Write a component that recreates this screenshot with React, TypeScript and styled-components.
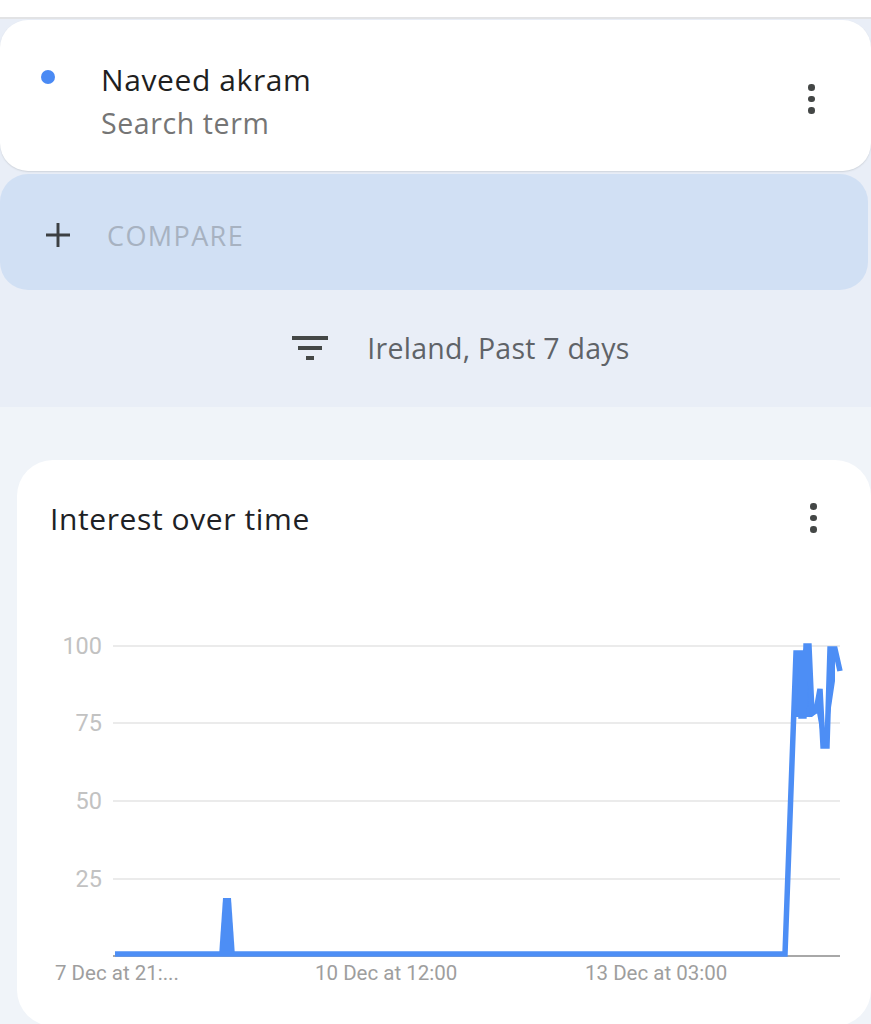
import React from 'react'
import styled, { createGlobalStyle } from 'styled-components'

const GlobalStyle = createGlobalStyle`
  html, body {
    margin: 0;
    padding: 0;
    background: #f0f4f9;
    font-family: "Open Sans", Roboto, Arial, sans-serif;
    overflow: hidden;
  }
`

// chart line, in svg coordinates (svg sits 17px in, 600px down)
const linePoints: [number, number][] = [
  [98, 353], [768, 353], [779, 52], [784, 52], [784, 115], [787, 115],
  [789, 45], [792, 45], [795, 112], [799, 110], [803, 88],
  [806, 145], [810, 145], [813, 48], [818, 48], [823, 70],
]

// filled spike around 8 Dec
const spike = '202,355 206,297 214,297 218,355'

// filled blob where the line zig-zags at the end
const blob = '776,60 779,52 785,52 788,45 793,45 797,112 803,88 807,140 811,140 813,48 818,48 818,80 812,120 806,145 800,112 795,116 787,116 776,116'

const gridLines = [
  { label: '100', y: 45 },
  { label: '75', y: 122 },
  { label: '50', y: 200 },
  { label: '25', y: 278 },
]

const xLabels = [
  { label: '7 Dec at 21:...', x: 38 },
  { label: '10 Dec at 12:00', x: 298 },
  { label: '13 Dec at 03:00', x: 568 },
]

const MoreDots: React.FC = () => (
  <DotsCol>
    <Dot />
    <Dot />
    <Dot />
  </DotsCol>
)

const App: React.FC = () => {
  return (
    <Page>
      <GlobalStyle />
      <TopStrip />
      <Header>
        <TermCard>
          <ColorDot />
          <TermText>
            <TermName>Naveed akram</TermName>
            <TermType>Search term</TermType>
          </TermText>
          <MenuSlot>
            <MoreDots />
          </MenuSlot>
        </TermCard>
        <CompareBar>
          <PlusIcon viewBox="0 0 24 24">
            <path d="M12 3v18M3 12h18" stroke="#3c4043" strokeWidth="2.2" fill="none" />
          </PlusIcon>
          <CompareLabel>COMPARE</CompareLabel>
        </CompareBar>
        <FilterRow>
          <FilterIcon viewBox="0 0 24 24">
            <path d="M10 18h4v-2h-4v2zM3 6v2h18V6H3zm3 7h12v-2H6v2z" fill="#444746" />
          </FilterIcon>
          <FilterText>Ireland, Past 7 days</FilterText>
        </FilterRow>
      </Header>
      <ChartSection>
        <ChartCard>
          <ChartHead>
            <ChartTitle>Interest over time</ChartTitle>
            <MoreDots />
          </ChartHead>
          <ChartSvg viewBox="0 0 854 400" width="854" height="400">
            {gridLines.map(g => (
              <g key={g.label}>
                <line x1="96" x2="823" y1={g.y} y2={g.y} stroke="#e4e4e4" strokeWidth="1.5" />
                <text x="85" y={g.y + 8} textAnchor="end" fontSize="23.5" fill="#c2c2c2"
                  fontFamily="Roboto, Arial, sans-serif">{g.label}</text>
              </g>
            ))}
            <line x1="96" x2="823" y1="355" y2="355" stroke="#a8a8a8" strokeWidth="2" />
            <polygon points={spike} fill="#4d8ef5" />
            <polygon points={blob} fill="#4d8ef5" />
            <polyline
              points={linePoints.map(p => p.join(',')).join(' ')}
              fill="none"
              stroke="#4d8ef5"
              strokeWidth="5.5"
              strokeLinejoin="miter"
            />
            {xLabels.map(l => (
              <text key={l.label} x={l.x} y="379" fontSize="20.5" fill="#9e9e9e"
                fontFamily="Roboto, Arial, sans-serif">{l.label}</text>
            ))}
          </ChartSvg>
        </ChartCard>
      </ChartSection>
    </Page>
  )
}

/* Styles */
const Page = styled.div`
  width: 871px;
  height: 1024px;
  overflow: hidden;
  background: #f0f4f9;
`

const TopStrip = styled.div`
  height: 17px;
  background: #ffffff;
  border-bottom: 2px solid #e2e3e5;
`

const Header = styled.div`
  background: #e9eef7;
  padding-top: 1px;
  height: 387px;
`

const TermCard = styled.div`
  display: flex;
  align-items: flex-start;
  height: 151px;
  box-sizing: border-box;
  padding: 40px 56px 0 41px;
  background: #ffffff;
  border-radius: 28px;
  box-shadow: 0 1px 1.5px rgba(60, 64, 67, 0.15);
`

const ColorDot = styled.span`
  width: 14px;
  height: 14px;
  margin-top: 10px;
  border-radius: 50%;
  background: #4a8af4;
  flex-shrink: 0;
`

const TermText = styled.div`
  display: flex;
  flex-direction: column;
  margin-left: 46px;
  flex: 1;
`

const TermName = styled.div`
  font-size: 30px;
  letter-spacing: 0.6px;
  line-height: 40px;
  color: #1f1f1f;
`

const TermType = styled.div`
  font-size: 28.5px;
  letter-spacing: 0.6px;
  line-height: 40px;
  margin-top: 3px;
  color: #757575;
`

const MenuSlot = styled.div`
  padding-top: 24px;
`

const DotsCol = styled.div`
  display: flex;
  flex-direction: column;
  align-items: center;
  gap: 5px;
  width: 7px;
`

const Dot = styled.span`
  width: 6.5px;
  height: 6.5px;
  border-radius: 50%;
  background: #444746;
`

const CompareBar = styled.div`
  display: flex;
  align-items: center;
  height: 116px;
  margin: 3px 3px 0 0;
  padding: 6px 0 0 42px;
  box-sizing: border-box;
  background: #d1e0f4;
  border-radius: 28px;
`

const PlusIcon = styled.svg`
  width: 32px;
  height: 32px;
`

const CompareLabel = styled.span`
  margin-left: 33px;
  font-size: 27px;
  letter-spacing: 1.4px;
  color: #a7b2c1;
`

const FilterRow = styled.div`
  display: flex;
  align-items: center;
  justify-content: center;
  height: 116px;
  padding-left: 45px;
`

const FilterIcon = styled.svg`
  width: 48px;
  height: 48px;
`

const FilterText = styled.span`
  margin-left: 33px;
  font-size: 28.5px;
  letter-spacing: 0.25px;
  color: #5f6368;
`

const ChartSection = styled.div`
  padding: 53px 0 0 17px;
`

const ChartCard = styled.div`
  background: #ffffff;
  border-radius: 36px;
  height: 566px;
`

const ChartHead = styled.div`
  display: flex;
  align-items: center;
  justify-content: space-between;
  padding: 38px 54px 0 33px;
  height: 40px;
`

const ChartTitle = styled.h2`
  margin: 0;
  font-size: 30px;
  letter-spacing: 0.6px;
  font-weight: 400;
  color: #202124;
`

const ChartSvg = styled.svg`
  display: block;
  margin-top: 63px;
`

export default App
